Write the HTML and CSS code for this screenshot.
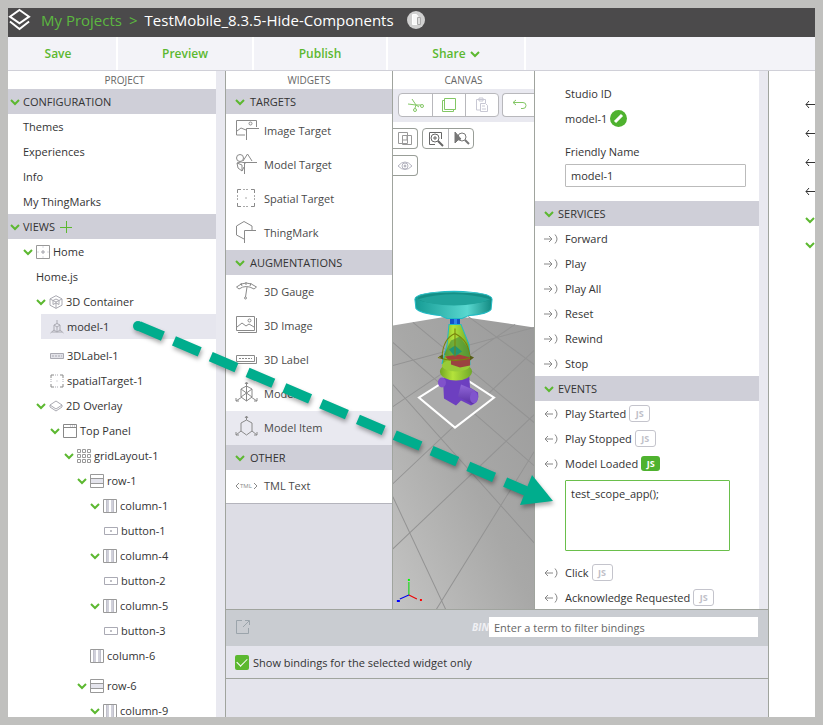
FILE: index.html
```html
<!DOCTYPE html>
<html lang="en">
<head>
<meta charset="utf-8">
<title>TestMobile_8.3.5-Hide-Components</title>
<link rel="stylesheet" href="styles.css">
</head>
<body>
<svg class="sprite" aria-hidden="true">
  <symbol id="chev" viewBox="0 0 10 10"><path d="M1 3l4 4 4-4" fill="none" stroke="#5cb830" stroke-width="2"/></symbol>
  <symbol id="view" viewBox="0 0 14 14"><path d="M.5.5h13v13H.5z" stroke="#999"/><path d="M5 7h4M7 5v4" stroke="#a0a0a8"/><path d="M7 1v2M7 11v2M1 7h2M11 7h2" stroke="#d8d8e0"/></symbol>
  <symbol id="cube" viewBox="0 0 14 14"><path d="M7 .7l6 3.2v6.3l-6 3.2-6-3.2V3.900zM1 4l6 3 6-3M7 7v6.300M4 5.500v4L7 8l3 1.500v-4L7 4z"/></symbol>
  <symbol id="model" viewBox="0 0 14 14"><path d="M7 0v4M.5 13l3.500-3M13.500 13L10 10M4 5l3-1.500L10 5v5l-3 2-3-2zM4 5l3 2 3-2M7 7v5M2 12h10"/></symbol>
  <symbol id="label" viewBox="0 0 14 14"><path d="M.5 4.500h13v5H.5z" fill="#e2e2e8"/><path d="M2 7h10" stroke-dasharray="2 1"/></symbol>
  <symbol id="spatial" viewBox="0 0 14 14"><path d="M1 4V1h3M10 1h3v3M13 10v3h-3M4 13H1v-3" stroke="#888"/><path d="M1 5v4M13 5v4M5 1h4M5 13h4M6.500 7h1.500" stroke-dasharray="1 1"/></symbol>
  <symbol id="layers" viewBox="0 0 14 14"><path d="M7 2l6 4-6 4-6-4zM1 6v2l6 4 6-4V6"/></symbol>
  <symbol id="panel" viewBox="0 0 14 14"><path d="M.5.500h13v13H.5zM.5 3.500h13" stroke="#888"/><path d="M7 2h6" stroke-dasharray="1 1"/></symbol>
  <symbol id="grid" viewBox="0 0 14 14"><path d="M.5.500h3v3h-3zM5.500.500h3v3h-3zM10.500.500h3v3h-3zM.5 5.500h3v3h-3zM5.500 5.500h3v3h-3zM10.500 5.500h3v3h-3zM.5 10.500h3v3h-3zM5.500 10.500h3v3h-3zM10.500 10.500h3v3h-3z" stroke="#999"/></symbol>
  <symbol id="row" viewBox="0 0 14 14"><path d="M1 5h12v4H1z" fill="#e4e4ec" stroke="none"/><path d="M.5.500h13v13H.5z" stroke="#999"/><path d="M1 4.500h12M1 9.500h12" stroke="#999"/></symbol>
  <symbol id="col" viewBox="0 0 14 14"><path d="M3 1h3v12H3zM8 1h3v12H8z" fill="#d0d0da" stroke="none"/><path d="M.5.500h13v13H.5z" stroke="#999"/><path d="M3.500 1v12M10.500 1v12" stroke="#c0c0ca"/></symbol>
  <symbol id="btn" viewBox="0 0 14 14"><path d="M.5 3.500h13v7H.5z" stroke="#aaaab4"/><path d="M6 7h2M7 6v2"/></symbol>
  <symbol id="in" viewBox="0 0 15 12"><path d="M0 6h8M5 3l3 3-3 3M11 1.500q4 4.500 0 9" stroke="#888"/></symbol>
  <symbol id="out" viewBox="0 0 15 12"><path d="M1 6h8M4 3L1 6l3 3M11 1.500q4 4.500 0 9" stroke="#888"/></symbol>
  <symbol id="left" viewBox="0 0 10 10"><path d="M1 5.500h9M4 2L1 5.500 4 9" stroke="#333"/></symbol>
</svg>
<div class="app">
  <header class="top">
    <svg class="logo" viewBox="0 0 24 24" fill="none" stroke="#fff" stroke-width="2"><path d="M12 2l10 7-10 7L2 9z"/><path d="M2 14l10 8 10-8"/></svg>
    <nav class="crumbs"><a href="#">My Projects</a><span class="sep">&gt;</span><span>TestMobile_8.3.5-Hide-Components</span></nav>
    <button class="badge" aria-label="Device type"><svg viewBox="0 0 18 18"><circle cx="9" cy="9" r="9" fill="#d0d0d0"/><path d="M5.500 3.500h4l1.500 2v8H5.500z" fill="#f8f8f8" stroke="#fff"/><path d="M10.500 6.500h3v7h-3z" fill="#ddd" stroke="#aaa"/></svg></button>
  </header>
  <nav class="actions"><button>Save</button><button>Preview</button><button>Publish</button><button>Share <svg class="chev"><use href="#chev"/></svg></button></nav>
  <main class="work">
    <section class="project">
      <h2 class="title">PROJECT</h2>
      <h3 class="band"><svg class="chev"><use href="#chev"/></svg>CONFIGURATION</h3>
      <a class="item conf" href="#">Themes</a>
      <a class="item conf" href="#">Experiences</a>
      <a class="item conf" href="#">Info</a>
      <a class="item conf" href="#">My ThingMarks</a>
      <h3 class="band"><svg class="chev"><use href="#chev"/></svg>VIEWS<button class="plus" aria-label="Add view"><svg viewBox="0 0 12 12"><path d="M6.500 0v12M0 6.500h12" stroke="#5cb830"/></svg></button></h3>
      <a class="item l1" href="#"><svg class="chev"><use href="#chev"/></svg><svg class="ico"><use href="#view"/></svg>Home</a>
      <a class="item l2" href="#">Home.js</a>
      <a class="item l2" href="#"><svg class="chev"><use href="#chev"/></svg><svg class="ico"><use href="#cube"/></svg>3D Container</a>
      <a class="item picked" href="#"><svg class="ico"><use href="#model"/></svg>model-1</a>
      <a class="item l3" href="#"><svg class="ico"><use href="#label"/></svg>3DLabel-1</a>
      <a class="item l3" href="#"><svg class="ico"><use href="#spatial"/></svg>spatialTarget-1</a>
      <a class="item l2" href="#"><svg class="chev"><use href="#chev"/></svg><svg class="ico"><use href="#layers"/></svg>2D Overlay</a>
      <a class="item l3" href="#"><svg class="chev"><use href="#chev"/></svg><svg class="ico"><use href="#panel"/></svg>Top Panel</a>
      <a class="item l4" href="#"><svg class="chev"><use href="#chev"/></svg><svg class="ico"><use href="#grid"/></svg>gridLayout-1</a>
      <a class="item l5" href="#"><svg class="chev"><use href="#chev"/></svg><svg class="ico"><use href="#row"/></svg>row-1</a>
      <a class="item l6" href="#"><svg class="chev"><use href="#chev"/></svg><svg class="ico"><use href="#col"/></svg>column-1</a>
      <a class="item l7" href="#"><svg class="ico"><use href="#btn"/></svg>button-1</a>
      <a class="item l6" href="#"><svg class="chev"><use href="#chev"/></svg><svg class="ico"><use href="#col"/></svg>column-4</a>
      <a class="item l7" href="#"><svg class="ico"><use href="#btn"/></svg>button-2</a>
      <a class="item l6" href="#"><svg class="chev"><use href="#chev"/></svg><svg class="ico"><use href="#col"/></svg>column-5</a>
      <a class="item l7" href="#"><svg class="ico"><use href="#btn"/></svg>button-3</a>
      <a class="item l6 row-end" href="#"><svg class="ico"><use href="#col"/></svg>column-6</a>
      <a class="item l5" href="#"><svg class="chev"><use href="#chev"/></svg><svg class="ico"><use href="#row"/></svg>row-6</a>
      <a class="item l6" href="#"><svg class="chev"><use href="#chev"/></svg><svg class="ico"><use href="#col"/></svg>column-9</a>
    </section>
    <div class="center">
      <div class="panes">
        <section class="widgets">
          <h2 class="title">WIDGETS</h2>
          <h3 class="band"><svg class="chev"><use href="#chev"/></svg>TARGETS</h3>
          <button class="widget"><svg class="wico" viewBox="0 0 24 24"><path d="M10 17H1.500V2.500h20V9M2 13l4-3 5 2M11.500 22V10.500H24"/><circle cx="15.500" cy="5.500" r="1.500"/></svg>Image Target</button>
          <button class="widget"><svg class="wico" viewBox="0 0 24 24"><circle cx="5" cy="6" r="3.500"/><path d="M8 9l4.500-7 4.500 7M2 11l5 2v6l-4-3zM2 11l4-1 5 1M9.500 22V10.500H22M9 15l-2 4"/></svg>Model Target</button>
          <button class="widget"><svg class="wico" viewBox="0 0 24 24"><path d="M2.500 7V3.500H6M16 3.500h3.500V7M19.500 17v3.500H16M6 20.500H2.500V17"/><path d="M2.500 9v6M19.500 9v6M8 3.500h6M8 20.500h6M11 11v2" stroke-dasharray="2 1" stroke="#aaa"/></svg>Spatial Target</button>
          <button class="widget"><svg class="wico" viewBox="0 0 24 24"><path d="M9 19l-7.500-4V6L9 1.500 17 6v4M9.500 23V10.500H21"/></svg>ThingMark</button>
          <h3 class="band"><svg class="chev"><use href="#chev"/></svg>AUGMENTATIONS</h3>
          <button class="widget"><svg class="wico" viewBox="0 0 24 24"><path d="M1.500 8Q11 0 21.500 8L19 10Q11 5 4 10zM6 4l1 3M11 3v3M16 4l-1 3M12 8l-1.500 10"/><circle cx="10.500" cy="19" r="1"/></svg>3D Gauge</button>
          <button class="widget"><svg class="wico" viewBox="0 0 24 24"><path d="M1.500 3.500h18v14h-18zM3 19.500h18.500V5M2 14l5-4 4 3 3-2 5 3"/><circle cx="14.500" cy="7.500" r="1.500"/></svg>3D Image</button>
          <button class="widget"><svg class="wico" viewBox="0 0 24 24"><path d="M1.500 8.500h18v6h-18zM3 16.500h18.500V10"/><path d="M4 11.500h13" stroke-dasharray="2 1"/></svg>3D Label</button>
          <button class="widget"><svg class="wico" viewBox="0 0 24 24"><path d="M11.500 2v7M1 20l6-4M22 20l-6-4M6 8l5.500-3L17 8v8l-5.500 4L6 16zM6 8l5.500 4L17 8M11.500 9v11M6 16l5.500-4 5.500 4M1 17v3h3M22 17v3h-3M10 3l1.500-2L13 3"/></svg>Model</button>
          <button class="widget lit"><svg class="wico" viewBox="0 0 24 24"><path d="M11.500 1v4M1 20l5-4M22 20l-5-4M6 8l5.500-3L17 8v8l-5.500 4L6 16zM1 17v3h3M22 17v3h-3M10 3l1.500-2L13 3"/></svg>Model Item</button>
          <h3 class="band"><svg class="chev"><use href="#chev"/></svg>OTHER</h3>
          <button class="widget last"><svg class="wico" viewBox="0 0 24 24"><path d="M4 9l-3 3 3 3M19 9l3 3-3 3"/><text x="5" y="14">TML</text></svg>TML Text</button>
        </section>
        <section class="canvas">
          <h2 class="title">CANVAS</h2>
          <div class="tools">
            <div class="group"><button aria-label="Cut"><svg viewBox="0 0 18 18" stroke="#83c765"><path d="M5 3l4 6 3 2M1 8l8 1h5M9 9l-1 3"/><circle cx="8" cy="14" r="1.500"/><circle cx="15" cy="10" r="1.500"/></svg></button><button aria-label="Copy"><svg viewBox="0 0 18 18" stroke="#83c765"><path d="M4.500 2.500h11v11h-11zM4 4.500H2.500v11h11V14"/></svg></button><button aria-label="Paste"><svg viewBox="0 0 18 18" stroke="#c8c8d4"><path d="M7 14H3.500V3.500h9V7M6 2h4v3H6zM7.500 7.500h5l2 2v6h-7zM9 10h3M9 13h4"/></svg></button></div>
            <div class="group cut"><button aria-label="Undo"><svg viewBox="0 0 18 18" stroke="#83c765"><path d="M2 6.500h10q3 0 3 3t-3 3h-2M5 4L2 6.500 5 9"/></svg></button></div>
          </div>
          <div class="viewport">
            <svg class="scene" viewBox="0 0 141 487" preserveAspectRatio="xMidYMax slice">
              <defs>
                <linearGradient id="floor" x1="1" y1="0" x2="0" y2="1"><stop offset="0" stop-color="#9a9a9a"/><stop offset=".5" stop-color="#a8a8a7"/><stop offset="1" stop-color="#c4c4c3"/></linearGradient>
                <linearGradient id="wheel"><stop offset="0" stop-color="#159b94"/><stop offset=".68" stop-color="#59d8d0"/><stop offset="1" stop-color="#118981"/></linearGradient>
                <linearGradient id="body"><stop offset="0" stop-color="#72a622"/><stop offset=".4" stop-color="#b4e33b"/><stop offset="1" stop-color="#70a82b"/></linearGradient>
                <linearGradient id="pipe" x1="0" y1="0" x2="0" y2="1"><stop offset="0" stop-color="#9167d9"/><stop offset="1" stop-color="#5930a2"/></linearGradient>
              </defs>
              <path d="M0 203L60 193l81 12v282H0z" fill="url(#floor)"/>
              <path d="M0 243L141 205M0 284L122 202M0 361L141 228M0 426L141 292M43 487l98-158M0 220l141 123M20 200l121 100M0 262l141 158M0 374l53 113M75 194l66 48" stroke="#939393" stroke-width="1" fill="none"/>
              <path d="M26 275l38-24 37 24-39 30z" fill="#aaa" stroke="#fff" stroke-width="2"/>
              <path d="M50 256l9-7h17l1 16 8 5q2 9-7 13l-10-5-5 5-12-7z" fill="#6d3fc0"/>
              <ellipse cx="49" cy="260" rx="4" ry="5" fill="#8152cb"/>
              <path d="M68 262l12 5q6 4 3 12l-3 3-15-8z" fill="url(#pipe)"/><ellipse cx="81" cy="275" rx="4" ry="6" fill="#8055cd"/>
              <path d="M57 194h10v12H57z" fill="#1252c7"/><path d="M61 194h3v12h-3z" fill="#2d80ee"/>
              <path d="M56 202h12l8 20 1 20-13 9-15-10 5-18z" fill="url(#body)" stroke="#22bac4"/>
              <path d="M51 232l7-14 9-4 9 13 1 9-14 3z" fill="#438a38" opacity=".6"/>
              <path d="M52 234l14-2 11 3v8l-15 1z" fill="#a6413b"/><path d="M56 227l6-4 7 6-7 5z" fill="#219675"/>
              <ellipse cx="63" cy="249" rx="16" ry="9" fill="url(#body)"/><ellipse cx="63" cy="243" rx="14" ry="6" fill="#98cb38"/><path d="M58 237h19v6l-10 2-9-3z" fill="#9a4240"/>
              <path d="M45 235q17 6 34 0M49 235q1-19 13-24 14 7 15 24M62 206v28" fill="none" stroke="#7a820b" stroke-width="1"/>
              <path d="M46 234l4-2v5zM81 235l-4-2v5z" fill="#575d16"/>
              <path d="M22 177q0-7 39-8 38 1 38 8l-1 10q-4 5-22 6l-7 3H54l-7-3q-20-2-24-7z" fill="url(#wheel)" stroke="#22bac4"/>
              <ellipse cx="61" cy="176" rx="36" ry="6" fill="#148f87"/><path d="M25 177q36-10 72 0-12 6-36 6t-36-6" fill="#21a39b"/>
              <path d="M16 472v-13" stroke="#0d0"/><path d="M16 472l8 4" stroke="#e00"/><path d="M16 472l-9 4" stroke="#00e"/><path d="M16 456v2" stroke="#0f0" stroke-width="2"/><path d="M27 477h2" stroke="#f00" stroke-width="2"/><path d="M4 478h3" stroke="#00f" stroke-width="2"/>
            </svg>
            <div class="overlay">
              <div class="line"><div class="group edge"><button aria-label="Duplicate"><svg viewBox="0 0 18 18" stroke="#999"><path d="M2.500 2.500h9v11h-9zM6.500 5.500h9v9h-9zM7 10h4V6"/></svg></button></div>
              <div class="group"><button aria-label="Zoom in"><svg viewBox="0 0 18 18" stroke="#666"><path d="M8 14.500H2.500v-12h12V9M8 6v4M6 8h4"/><circle cx="8" cy="8" r="4"/><path d="M11 11l5 5" stroke-width="2"/></svg></button><button aria-label="Zoom to selection"><svg viewBox="0 0 18 18" stroke="#777"><path d="M3 2v11l3-3 3-1z" fill="#777"/><circle cx="10" cy="7" r="4"/><path d="M13 10l4 4" stroke-width="2"/></svg></button></div></div>
              <div class="group edge"><button aria-label="Visibility"><svg viewBox="0 0 18 18" stroke="#b4b4c0"><path d="M2 9q7-8 14 0-7 7-14 0z"/><circle cx="9" cy="9" r="3"/><circle cx="9" cy="9" r="1" fill="#aaa"/></svg></button></div>
            </div>
          </div>
        </section>
        <section class="props">
          <div class="fields">
            <strong class="item">Studio ID</strong>
            <div class="item id">model-1 <button class="edit" aria-label="Edit ID"><svg viewBox="0 0 17 17"><circle cx="8.500" cy="8.500" r="8.500" fill="#4fb22f"/><path d="M5 12l7-7" stroke="#fff" stroke-width="3"/></svg></button></div>
            <label class="item" for="friendly">Friendly Name</label>
            <input id="friendly" value="model-1">
          </div>
          <h3 class="band"><svg class="chev"><use href="#chev"/></svg>SERVICES</h3>
          <div class="item io"><svg class="port"><use href="#in"/></svg>Forward</div>
          <div class="item io"><svg class="port"><use href="#in"/></svg>Play</div>
          <div class="item io"><svg class="port"><use href="#in"/></svg>Play All</div>
          <div class="item io"><svg class="port"><use href="#in"/></svg>Reset</div>
          <div class="item io"><svg class="port"><use href="#in"/></svg>Rewind</div>
          <div class="item io"><svg class="port"><use href="#in"/></svg>Stop</div>
          <h3 class="band"><svg class="chev"><use href="#chev"/></svg>EVENTS</h3>
          <div class="item io"><svg class="port"><use href="#out"/></svg>Play Started<button class="js">JS</button></div>
          <div class="item io"><svg class="port"><use href="#out"/></svg>Play Stopped<button class="js">JS</button></div>
          <div class="item io"><svg class="port"><use href="#out"/></svg><label for="code">Model Loaded</label><button class="js on">JS</button></div>
          <div class="code"><textarea id="code">test_scope_app();</textarea></div>
          <div class="item io"><svg class="port"><use href="#out"/></svg>Click<button class="js">JS</button></div>
          <div class="item io"><svg class="port"><use href="#out"/></svg>Acknowledge Requested<button class="js">JS</button></div>
        </section>
      </div>
      <section class="bindings">
        <div class="bindbar"><button class="pop" aria-label="Open in window"><svg viewBox="0 0 16 16"><path d="M7 1.500H1.500v13h12V9M10 1.500h4.500V6M14 2L8 8" fill="none" stroke="#9ba4ab"/></svg></button><em>BIN</em><input aria-label="Filter bindings" placeholder="Enter a term to filter bindings"></div>
        <label class="only"><input type="checkbox" checked>Show bindings for the selected widget only</label>
      </section>
    </div>
    <aside class="data">
      <svg class="arr"><use href="#left"/></svg><svg class="arr"><use href="#left"/></svg><svg class="arr"><use href="#left"/></svg><svg class="arr"><use href="#left"/></svg>
      <svg class="chev"><use href="#chev"/></svg><svg class="chev"><use href="#chev"/></svg>
    </aside>
  </main>
  <svg class="pointer" viewBox="0 0 430 200" aria-hidden="true"><g fill="#00ad8d" stroke="#00ad8d"><path d="M10 7l387 165" fill="none" stroke-width="10" stroke-dasharray="26 12 28 12 28 12 28 12 28 12 28 12 28 12 28 12 28 12 28 12 50"/><circle cx="9" cy="7" r="5" stroke="none"/><path d="M403 156l21 26-33 4z" stroke="none"/></g></svg>
</div>
</body>
</html>
```
FILE: styles.css
```css
* { box-sizing: border-box; }
body { margin: 0; background: #c0c0be; font: 11px/17px "Open Sans", "Noto Sans", sans-serif; color: #333; }
h2, h3 { margin: 0; font-size: 11px; font-weight: 400; }
button { font: inherit; color: inherit; background: none; border: 0; padding: 0; }
a { color: inherit; text-decoration: none; }
svg { flex: none; display: block; fill: none; }
.sprite { position: absolute; width: 0; height: 0; }
.app { position: relative; height: 100vh; border: 8px solid #c0c0be; display: flex; flex-direction: column; overflow: hidden; }

.top { height: 29px; flex: none; background: #4b4a4b; display: flex; align-items: center; padding-bottom: 6px; color: #fff; }
.logo { width: 23px; height: 23px; }
.crumbs { display: flex; gap: 7px; margin-left: 10px; font-size: 15px; line-height: 22px; }
.crumbs a, .sep { color: #5cb840; }
.badge { margin-left: 13px; }
.badge svg { width: 18px; height: 18px; }
.actions { height: 34px; flex: none; background: #f3f3f8; border-bottom: 1px solid #d0d0d8; display: grid; grid-template-columns: 110px 136px 134px 138px 1fr; }
.actions button { display: flex; align-items: center; justify-content: center; gap: 4px; font-size: 12px; font-weight: 600; color: #5cb830; border-right: 2px solid #fff; }
.actions button:first-child { padding-right: 8px; }

.work { flex: 1; min-height: 0; display: grid; grid-template-columns: 208px minmax(0, 1fr) 46px; background: #e9e9f0; }
.project { background: #fff; overflow: hidden; }
.title { height: 18px; line-height: 18px; font-size: 10px; text-align: center; color: #666; background: #fff; }
.project .title { padding-left: 25px; }
.band { height: 25px; display: flex; align-items: center; gap: 5px; padding-left: 9px; background: #cfcfd8; }
.project .band { padding-left: 2px; gap: 3px; }
.chev { width: 10px; height: 10px; }
.plus { margin-left: 2px; }
.plus svg { width: 12px; height: 12px; }
.item { height: 25px; display: flex; align-items: center; gap: 3px; }
.ico { width: 14px; height: 14px; stroke: #aaaab2; }
.conf { padding-left: 15px; }
.l1 { padding-left: 15px; }
.l2 { padding-left: 28px; }
.l3 { padding-left: 42px; }
.l4 { padding-left: 56px; }
.l5 { padding-left: 69px; }
.l6 { padding-left: 82px; }
.l7 { padding-left: 96px; }
.picked { margin: 0 0 4px 33px; padding-left: 9px; background: #e6e6ee; }
.row-end { margin-bottom: 5px; }

.center { margin-left: 9px; border: solid #a0a49e; border-width: 0 1px; display: flex; flex-direction: column; min-height: 0; }
.panes { flex: 1; min-height: 0; overflow: hidden; display: grid; grid-template-columns: 167px minmax(0, 1fr) 225px; padding-right: 9px; }
.widgets { border-right: 1px solid #a0a49e; background: #dddde5; }
.widget { width: 100%; height: 34px; display: flex; align-items: center; gap: 5px; padding: 0 0 2px 9px; background: #fff; text-align: left; color: #4a4a4a; }
.wico { width: 24px; height: 24px; stroke: #8a8a8a; }
.wico text { font-size: 6px; fill: #888; stroke: none; }
.lit { background: #e9e9f0; }
.last { border-bottom: 1px solid #b4b4bc; }

.canvas { display: flex; flex-direction: column; min-width: 0; overflow: hidden; background: #fff; }
.tools { height: 33px; flex: none; display: flex; gap: 3px; padding: 4px 0 0 5px; background: #e9e9f0; }
.group { flex: none; display: flex; background: #fff; border: 1px solid #b8b8bc; border-radius: 4px; height: 24px; }
.group button { width: 33px; display: flex; align-items: center; justify-content: center; }
.group button + button { border-left: 1px solid #b8b8bc; }
.group svg { width: 18px; height: 18px; }
.cut { border-right: 0; border-radius: 4px 0 0 4px; }
.viewport { flex: 1; position: relative; overflow: hidden; }
.scene { position: absolute; inset: 0; width: 100%; height: 100%; }
.overlay { position: relative; padding-top: 6px; display: flex; flex-direction: column; align-items: flex-start; gap: 6px; }
.line { display: flex; gap: 4px; }
.overlay .group { height: 21px; border-color: #999e98; }
.overlay .group button { width: 25px; }
.overlay .edge { border-left: 0; border-radius: 0 4px 4px 0; }
.overlay .edge button { width: 24px; }

.props { border-left: 1px solid #a0a49e; background: #fff; }
.fields { height: 130px; padding: 10px 13px 0 30px; }
.fields strong { font-weight: 500; }
.id { margin-bottom: 8px; }
.edit svg { width: 17px; height: 17px; }
.fields input { width: 100%; height: 23px; border: 1px solid #bbb; border-radius: 1px; padding: 0 5px; font: inherit; color: inherit; }
.props .band { gap: 4px; }
.io { padding-left: 9px; }
.port { width: 15px; height: 12px; margin-right: 3px; }
.js { width: 21px; height: 17px; border: 1px solid #c4c4cc; border-radius: 3px; font-size: 9px; font-weight: 700; line-height: 15px; color: #c0c0c8; }
.on { width: 19px; height: 15px; border: 0; background: #4fb22f; color: #fff; }
.code { padding: 4px 29px 9px 30px; }
.code textarea { display: block; width: 100%; height: 71px; border: 1px solid #6abf4b; border-radius: 1px; padding: 4px 5px; font: inherit; color: inherit; resize: none; outline: 0; }

.bindings { flex: none; height: 108px; border-top: 1px solid #a0a49e; background: #e4e4ec; }
.bindbar { height: 36px; background: #c9ccd1; display: flex; align-items: center; padding: 0 10px 2px 9px; }
.pop svg { width: 16px; height: 16px; }
.bindbar em { margin-left: auto; font-size: 10px; font-weight: 700; color: #f0f0f4; }
.bindbar input { width: 269px; height: 20px; border: 0; padding: 0 5px; font: inherit; }
.bindbar input::placeholder { color: #666; }
.only { height: 33px; border-bottom: 1px solid #a0a49e; display: flex; align-items: center; gap: 4px; padding-left: 9px; }
.only input { appearance: none; width: 14px; height: 15px; margin: 0; border-radius: 2px; background: #5cb830; display: grid; place-items: center; }
.only input::before { content: ""; width: 9px; height: 5px; border: solid #fff; border-width: 0 0 1px 1px; transform: rotate(-45deg); margin-bottom: 3px; }

.data { background: #fff; padding-top: 28px; display: flex; flex-direction: column; align-items: flex-end; overflow: hidden; }
.arr { width: 10px; height: 10px; margin-bottom: 19px; }
.data .chev { margin-bottom: 15px; }
.pointer { position: absolute; left: 121px; top: 311px; width: 430px; height: 200px; filter: drop-shadow(1px 3px 2px #0005); pointer-events: none; }
```
